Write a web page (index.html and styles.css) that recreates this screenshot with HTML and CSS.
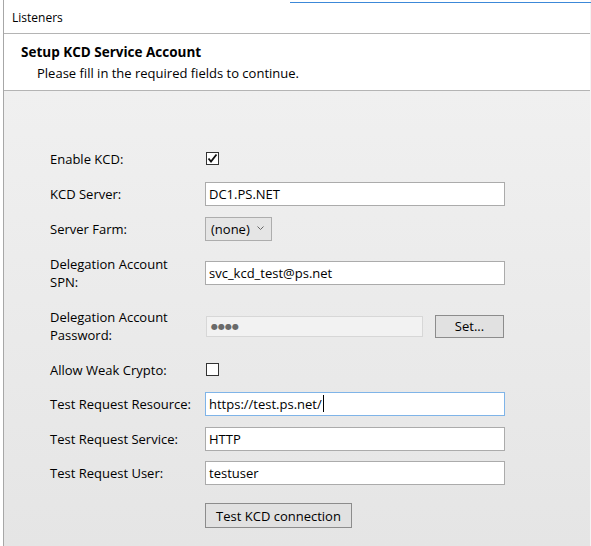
FILE: index.html
```html
<!DOCTYPE html>
<html>
<head>
<meta charset="utf-8">
<link rel="stylesheet" href="styles.css">
</head>
<body>
<div class="window">
  <div class="titlebar">
    <div class="focusline"></div>
    <span class="title">Listeners</span>
  </div>
  <div class="header">
    <div class="h-title">Setup KCD Service Account</div>
    <div class="h-sub">Please fill in the required fields to continue.</div>
  </div>
  <div class="form">
    <div class="row r35">
      <div class="label">Enable KCD:</div>
      <div class="ctrl"><span class="check"><svg width="11" height="11" viewBox="0 0 11 11"><path d="M1.5 5.5 L4 8.5 L9.5 1.5" fill="none" stroke="#111" stroke-width="1.8"/></svg></span></div>
    </div>
    <div class="row r35">
      <div class="label">KCD Server:</div>
      <div class="ctrl"><span class="input">DC1.PS.NET</span></div>
    </div>
    <div class="row r35">
      <div class="label">Server Farm:</div>
      <div class="ctrl"><span class="select">(none)<svg class="chev" width="7" height="5" viewBox="0 0 7 5"><path d="M0.5 0.5 L3.5 3.5 L6.5 0.5" fill="none" stroke="#666" stroke-width="1"/></svg></span></div>
    </div>
    <div class="row r53">
      <div class="label">Delegation Account<br>SPN:</div>
      <div class="ctrl"><span class="input spn">svc_kcd_test@ps.net</span></div>
    </div>
    <div class="row r54">
      <div class="label">Delegation Account<br>Password:</div>
      <div class="ctrl pwrow"><span class="pw">&#9679;&#9679;&#9679;&#9679;</span><span class="btn setbtn">Set...</span></div>
    </div>
    <div class="row r33">
      <div class="label">Allow Weak Crypto:</div>
      <div class="ctrl"><span class="check"></span></div>
    </div>
    <div class="row r35">
      <div class="label">Test Request Resource:</div>
      <div class="ctrl"><span class="input focus">https://test.ps.net/<span class="caret"></span></span></div>
    </div>
    <div class="row r35">
      <div class="label">Test Request Service:</div>
      <div class="ctrl"><span class="input">HTTP</span></div>
    </div>
    <div class="row r34">
      <div class="label">Test Request User:</div>
      <div class="ctrl"><span class="input">testuser</span></div>
    </div>
    <div class="row r51">
      <div class="label"></div>
      <div class="ctrl"><span class="btn testbtn">Test KCD connection</span></div>
    </div>
  </div>
</div>
</body>
</html>
```

FILE: styles.css
```css
html, body {
  margin: 0;
  padding: 0;
  background: #ffffff;
}
body {
  font-family: "Segoe UI", "Open Sans", "Noto Sans", sans-serif;
  font-size: 13px;
  color: #000;
  width: 591px;
  height: 546px;
  overflow: hidden;
}
.window {
  margin-left: 3px;
  width: 586px;
  height: 546px;
  border-left: 1px solid #a7a7a7;
  border-right: 1px solid #f4f4f4;
  display: flex;
  flex-direction: column;
}
.titlebar {
  position: relative;
  border-bottom: 1px solid #b4b4b4;
  background: #fff;
  display: flex;
  align-items: center;
  padding-left: 8px;
  box-sizing: border-box;
  height: 34px;
}
.focusline {
  position: absolute;
  left: 286px;
  right: -1px;
  top: 2px;
  height: 1px;
  background: #3c88d8;
}
.title {
  font-size: 12px;
  padding-top: 1px;
}
.header {
  height: 57px;
  box-sizing: border-box;
  border-bottom: 1px solid #b4b4b4;
  padding: 9px 0 0 17px;
  background: #fff;
}
.h-title {
  font-weight: bold;
  font-size: 13.5px;
  line-height: 19px;
}
.h-sub {
  padding-left: 16px;
  font-size: 13px;
  line-height: 18px;
  margin-top: 2px;
}
.form {
  flex: 1;
  background: linear-gradient(#f0f0f0, #e5e5e5);
  padding-top: 50px;
  box-sizing: border-box;
}
.row {
  display: flex;
  align-items: center;
}
.r33 { height: 33px; }
.r34 { height: 34px; }
.r35 { height: 35px; }
.r51 { height: 51px; }
.r53 { height: 53px; }
.r54 { height: 54px; }
.label {
  width: 155px;
  padding-left: 46px;
  line-height: 18px;
  flex: none;
}
.ctrl {
  display: flex;
  align-items: center;
}
.check {
  width: 13px;
  height: 13px;
  box-sizing: border-box;
  border: 1px solid #333;
  background: #fff;
  margin-left: 1px;
  display: flex;
  align-items: center;
  justify-content: center;
}
.input {
  width: 300px;
  height: 24px;
  box-sizing: border-box;
  border: 1px solid #ababab;
  background: #fff;
  padding-left: 3px;
  display: flex;
  align-items: center;
}
.input.focus {
  border-color: #7fb4e8;
}
.caret {
  display: inline-block;
  width: 1px;
  height: 17px;
  background: #000;
  margin-left: 1px;
}
.select {
  width: 67px;
  height: 24px;
  box-sizing: border-box;
  border: 1px solid #adadad;
  background: #e5e5e5;
  padding-left: 5px;
  display: flex;
  align-items: center;
}
.chev {
  margin-left: 7px;
}
.pwrow {
  gap: 12px;
}
.pw {
  width: 217px;
  height: 21px;
  margin-left: 1px;
  box-sizing: border-box;
  border: 1px solid #d7d7d7;
  background: #f2f2f2;
  color: #6a6a6a;
  font-size: 8px;
  padding-left: 4px;
  display: flex;
  align-items: center;
  font-family: "DejaVu Sans", sans-serif;
}
.btn {
  box-sizing: border-box;
  border: 1px solid #8c8c8c;
  background: #e1e1e1;
  display: flex;
  align-items: center;
  justify-content: center;
}
.setbtn {
  width: 69px;
  height: 23px;
}
.testbtn {
  width: 147px;
  height: 25px;
}
```
